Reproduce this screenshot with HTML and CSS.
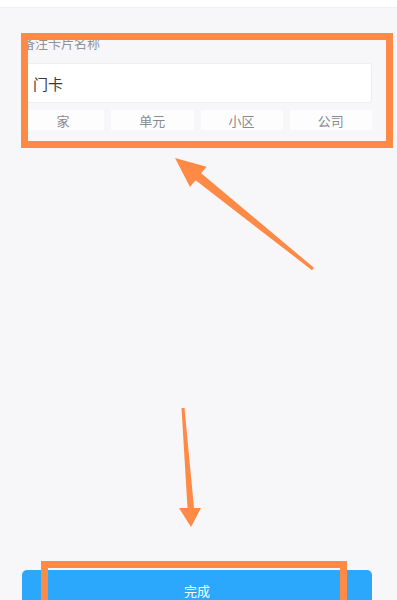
FILE: index.html
```html
<!DOCTYPE html>
<html lang="zh-CN">
<head>
<meta charset="utf-8">
<title>备注卡片名称</title>
<link rel="stylesheet" href="styles.css">
</head>
<body>
<div class="page">
  <div class="topbar"></div>
  <div class="form">
    <div class="label">备注卡片名称</div>
    <div class="input">门卡</div>
    <div class="chips">
      <div class="chip">家</div>
      <div class="chip">单元</div>
      <div class="chip">小区</div>
      <div class="chip">公司</div>
    </div>
  </div>
  <div class="btn"><span class="btn-text">完成</span></div>
  <svg class="annot" width="397" height="600" viewBox="0 0 397 600">
    <rect x="24.5" y="36.5" width="365" height="108" fill="none" stroke="#ff8a45" stroke-width="7"/>
    <rect x="44.5" y="564.5" width="299" height="60" fill="none" stroke="#ff8a45" stroke-width="7"/>
    <polygon points="175,158 206.6,166.7 201.2,173.3 314,267.8 312,270.2 195.6,180.3 190,187" fill="#ff8a45"/>
    <polygon points="181.5,408 184.5,408 194,508 201,508 191,527 179,508 187.5,508" fill="#ff8a45"/>
  </svg>
</div>
</body>
</html>
```
FILE: styles.css
```css
html, body {
  margin: 0;
  padding: 0;
}
body {
  background: #f7f6f9;
  font-family: "Noto Sans CJK SC", "Noto Sans", sans-serif;
  overflow: hidden;
}
.page {
  position: relative;
  width: 397px;
  height: 600px;
  overflow: hidden;
}
.topbar {
  height: 7px;
  background: #ffffff;
  border-bottom: 1px solid #efeef2;
}
.form {
  padding: 0 25px 0 22px;
}
.label {
  margin-top: 26px;
  font-size: 13px;
  line-height: 18px;
  color: #939396;
}
.input {
  margin-top: 11px;
  height: 40px;
  box-sizing: border-box;
  background: #ffffff;
  border: 1px solid #eeedf1;
  border-radius: 3px;
  padding-left: 10px;
  display: flex;
  align-items: center;
  font-size: 15px;
  color: #3a3a3a;
}
.chips {
  margin-top: 7px;
  display: grid;
  grid-template-columns: repeat(4, 1fr);
  gap: 7px;
}
.chip {
  height: 20px;
  background: #fdfdfe;
  display: flex;
  align-items: center;
  justify-content: center;
  font-size: 13px;
  color: #8a8a8e;
}
.btn {
  margin: 440px 25px 0 22px;
  height: 30px;
  background: #2ba8fc;
  border-radius: 5px 5px 0 0;
  color: #ffffff;
  font-size: 13px;
  line-height: 14px;
  box-sizing: border-box;
  padding-top: 14px;
  text-align: center;
}
.btn-text {
  display: inline-block;
  line-height: 14px;
}
.annot {
  position: absolute;
  left: 0;
  top: 0;
  pointer-events: none;
}
```
